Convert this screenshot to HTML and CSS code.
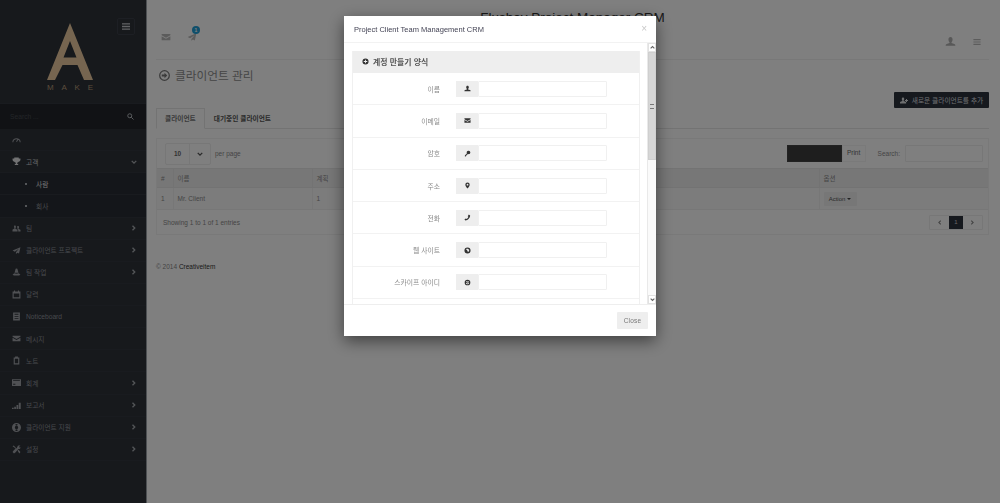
FILE: index.html
```html
<!DOCTYPE html>
<html lang="ko">
<head>
<meta charset="utf-8">
<title>Project Client Team Management CRM</title>
<link rel="stylesheet" href="styles.css">
</head>
<body>
<svg class="sprites" width="0" height="0" aria-hidden="true">
  <symbol id="i-user" viewBox="0 0 16 16"><path d="M8 1.500c2 0 3 1.500 3 3.500 0 1.600-.6 3-1.500 3.800v1.200l4 1.500c.8.300 1.500 1 1.500 1.500v1H1v-1c0-.5.700-1.200 1.500-1.500l4-1.500V8.800C5.600 8 5 6.600 5 5c0-2 1-3.500 3-3.500z"/></symbol>
  <symbol id="i-mail" viewBox="0 0 16 16"><path d="M1 3h14v2L8 9 1 5zM1 6.800l7 4 7-4V13H1z"/></symbol>
  <symbol id="i-key" viewBox="0 0 16 16"><path d="M10.500 1.500a4 4 0 0 1 0 8c-.5 0-1-.1-1.400-.3L8 10.500H6.500V12H5v1.500L3.500 15H2v-2.500l4.800-4.800a4 4 0 0 1 3.700-6.200z"/></symbol>
  <symbol id="i-pin" viewBox="0 0 16 16"><path fill-rule="evenodd" d="M8 1a5 5 0 0 1 5 5c0 3-3 6-5 9-2-3-5-6-5-9a5 5 0 0 1 5-5zm0 3a2 2 0 1 0 0 4 2 2 0 0 0 0-4z"/></symbol>
  <symbol id="i-phone" viewBox="0 0 16 16"><path d="M11 1l3 2.500C14 9 9 14.500 3 15l-2-3 3.500-2 1.500 1.500c2-1 3.500-3 4-5L8.500 5z"/></symbol>
  <symbol id="i-globe" viewBox="0 0 16 16"><path fill-rule="evenodd" d="M8 1a7 7 0 1 1 0 14A7 7 0 0 1 8 1zM4 5l3 2 1 3 3 1 1-4-3-3H6z"/></symbol>
  <symbol id="i-skype" viewBox="0 0 16 16"><path fill-rule="evenodd" d="M8 1.500a6.500 6.500 0 0 1 6.500 6.500A6.500 6.500 0 0 1 8 14.500 6.500 6.500 0 0 1 1.500 8 6.500 6.500 0 0 1 8 1.500zM8 4.500c-2 0-3 .8-3 2 0 2.500 4.500 1.500 4.500 3 0 .6-1 .7-1.500.7-1.500 0-1.500-1-2.500-1-.5 0-.9.4-.9.8 0 1 1.700 1.800 3.400 1.800 2 0 3.200-1 3.200-2.300 0-2.700-4.500-1.800-4.500-3.100 0-.5.6-.6 1.200-.6 1.300 0 1.300.8 2.200.8.500 0 .9-.4.9-.8 0-.8-1.300-1.300-3-1.300z"/></symbol>
  <symbol id="i-chev" viewBox="0 0 8 8"><path d="M2 1l3 3-3 3" fill="none" stroke="currentColor" stroke-width="1.800"/></symbol>
  <symbol id="i-down" viewBox="0 0 8 8"><path d="M1 2.500l3 3 3-3" fill="none" stroke="currentColor" stroke-width="1.800"/></symbol>
  <symbol id="i-menu" viewBox="0 0 12 10"><path d="M0 0h12v2H0zM0 4h12v2H0zM0 8h12v2H0z"/></symbol>
  <symbol id="i-send" viewBox="0 0 16 16"><path d="M15 2L1 8l4 2 7-5-5 6v3l2.500-2 3 1.500z"/></symbol>
  <symbol id="i-team" viewBox="0 0 18 14"><path d="M5.500 1c1.500 0 2.300 1 2.300 2.800 0 1.300-.5 2.200-1 2.700v1l3.200 1.500c.5.300 1 .8 1 1.500V13H1v-3c0-.7.500-1.200 1-1.500l3-1.500v-1c-.6-.5-1-1.400-1-2.700C4 2 4.500 1 5.500 1zM12 2c1.300 0 2 1 2 2.500 0 1-.4 1.800-.8 2.200V8l2.800 1c.5.200 1 .7 1 1.300V13h-4.500v-2.500c0-1-.7-1.700-1.500-2.200V6.700c-.4-.5-.5-1.200-.5-2.200C10 3 10.700 2 12 2z"/></symbol>
  <symbol id="i-hat" viewBox="0 0 16 16"><path d="M8 1a2 2 0 0 1 2 2l1.500 5.500h-7L6 3a2 2 0 0 1 2-2zM4 9.500c1.500 1 6.500 1 8 0l3 2.500c-1 2-13 2-14 0z"/></symbol>
  <symbol id="i-cal" viewBox="0 0 16 16"><path fill-rule="evenodd" d="M1 2.500h2.500V1h2v1.500h5V1h2v1.500H15V15H1zM3 6v7h10V6z"/></symbol>
  <symbol id="i-doc" viewBox="0 0 16 16"><path fill-rule="evenodd" d="M2 1h12v14H2zM4.500 3v2h7V3zM4.500 7v1.500h7V7zM4.500 10.500V12h7v-1.500z"/></symbol>
  <symbol id="i-note" viewBox="0 0 16 16"><path fill-rule="evenodd" d="M3 2.500h2.500V1h5v1.500H13V15H3zM5 5v8h6V5z"/></symbol>
  <symbol id="i-card" viewBox="0 0 16 12"><path fill-rule="evenodd" d="M0 0h16v12H0zM2 2v1.500h12V2zM2 8v2h4V8z"/></symbol>
  <symbol id="i-bars" viewBox="0 0 16 12"><path d="M0 10h3v2H0zM4 8h3v4H4zM8 5h3v7H8zM12 1h3.500v11H12z"/></symbol>
  <symbol id="i-life" viewBox="0 0 16 16"><path fill-rule="evenodd" d="M8 0a8 8 0 1 1 0 16A8 8 0 0 1 8 0zm0 5a3 3 0 1 0 0 6 3 3 0 0 0 0-6zM6 2.300l.5 2h3l.5-2a6 6 0 0 0-4 0zM6 13.700a6 6 0 0 0 4 0l-.5-2h-3z"/></symbol>
  <symbol id="i-tools" viewBox="0 0 16 16"><path d="M1 2l2-1 5 5 2.500-4.500C12 .5 14 .5 15 1l-2.500 2 .5 1.500 2-.5c.3 1.500-.8 3.500-3.500 3.300L6 13.500 3.500 15 1 12.500 2.500 10l4-4L3 3.500zM10 10l1.500-1.500L15 12.500 13 15z"/></symbol>
  <symbol id="i-gauge" viewBox="0 0 16 14"><path fill="none" stroke="currentColor" stroke-width="1.800" d="M1.500 12a6.500 6.500 0 1 1 13 0M8 11l3-5"/></symbol>
  <symbol id="i-trophy" viewBox="0 0 16 16"><path d="M4 1h8v1.500h3V5c0 2-1.500 3-3.200 3.300C11 9.500 10 10 9 10.300V12h2v2H5v-2h2v-1.700c-1-.3-2-.8-2.800-2C2.500 8 1 7 1 5V2.500h3z"/></symbol>
  <symbol id="i-search" viewBox="0 0 14 14"><path fill="none" stroke="currentColor" stroke-width="2" d="M8.500 8.500L13 13M9.500 5.500a4 4 0 1 1-8 0 4 4 0 0 1 8 0z"/></symbol>
  <symbol id="i-go" viewBox="0 0 16 16"><path fill="none" stroke="currentColor" stroke-width="1.800" d="M8 1a7 7 0 1 1 0 14A7 7 0 0 1 8 1z"/><path d="M8 4l4 4-4 4V9.500H4v-3h4z"/></symbol>
  <symbol id="i-plus" viewBox="0 0 16 16"><path fill-rule="evenodd" d="M8 1a7 7 0 1 1 0 14A7 7 0 0 1 8 1zM7 4v3H4v2h3v3h2V9h3V7H9V4z"/></symbol>
  <symbol id="i-adduser" viewBox="0 0 16 14"><path d="M6 1c1.700 0 2.500 1.200 2.500 3 0 1.300-.5 2.300-1.200 2.800V8l4 1.500c.5.200 1 .7 1 1.300V13H0v-2.200c0-.6.500-1.100 1-1.300l3.700-1.500V6.800C4 6.300 3.500 5.300 3.500 4 3.500 2.200 4.300 1 6 1zM12 4h2v2h2v2h-2v2h-2V8h-2V6h2z"/></symbol>
</svg>

<div class="app">
  <aside class="sidebar">
    <div class="brand">
      <div class="logo">
        <svg class="logo-a" viewBox="0 0 46 57" aria-hidden="true"><path fill-rule="evenodd" d="M23 0L46 57H37L30.500 42H15.500L8 57H0zM23 18L16.500 34.500H29.500z"/></svg>
        <div class="logo-word"><span>M</span><span>A</span><span>K</span><span>E</span></div>
      </div>
      <button class="collapse"><svg class="ic-menu"><use href="#i-menu"/></svg></button>
    </div>
    <div class="side-search">
      <span>Search ...</span>
      <svg class="ic-search"><use href="#i-search"/></svg>
    </div>
    <nav class="nav">
      <a class="nav-item"><svg class="nav-ic"><use href="#i-gauge"/></svg></a>
      <a class="nav-item open"><svg class="nav-ic"><use href="#i-trophy"/></svg><span>고객</span><svg class="chev"><use href="#i-down"/></svg></a>
      <a class="nav-sub active"><i></i><span>사람</span></a>
      <a class="nav-sub"><i></i><span>회사</span></a>
      <a class="nav-item"><svg class="nav-ic"><use href="#i-team"/></svg><span>팀</span><svg class="chev"><use href="#i-chev"/></svg></a>
      <a class="nav-item"><svg class="nav-ic"><use href="#i-send"/></svg><span>클라이언트 프로젝트</span><svg class="chev"><use href="#i-chev"/></svg></a>
      <a class="nav-item"><svg class="nav-ic"><use href="#i-hat"/></svg><span>팀 작업</span><svg class="chev"><use href="#i-chev"/></svg></a>
      <a class="nav-item"><svg class="nav-ic"><use href="#i-cal"/></svg><span>달력</span></a>
      <a class="nav-item"><svg class="nav-ic"><use href="#i-doc"/></svg><span>Noticeboard</span></a>
      <a class="nav-item"><svg class="nav-ic"><use href="#i-mail"/></svg><span>메시지</span></a>
      <a class="nav-item"><svg class="nav-ic"><use href="#i-note"/></svg><span>노트</span></a>
      <a class="nav-item"><svg class="nav-ic"><use href="#i-card"/></svg><span>회계</span><svg class="chev"><use href="#i-chev"/></svg></a>
      <a class="nav-item"><svg class="nav-ic"><use href="#i-bars"/></svg><span>보고서</span><svg class="chev"><use href="#i-chev"/></svg></a>
      <a class="nav-item"><svg class="nav-ic"><use href="#i-life"/></svg><span>클라이언트 지원</span><svg class="chev"><use href="#i-chev"/></svg></a>
      <a class="nav-item"><svg class="nav-ic"><use href="#i-tools"/></svg><span>설정</span><svg class="chev"><use href="#i-chev"/></svg></a>
    </nav>
  </aside>

  <main class="main">
    <h1 class="site-title">Flushay Project Manager CRM</h1>
    <header class="topbar">
      <div class="top-left">
        <svg class="top-ic"><use href="#i-mail"/></svg>
        <span class="notif"><svg class="top-ic"><use href="#i-send"/></svg><b>1</b></span>
      </div>
      <div class="top-right">
        <svg class="top-user"><use href="#i-user"/></svg>
        <svg class="top-menu"><use href="#i-menu"/></svg>
      </div>
    </header>
    <div class="page-head">
      <svg class="head-ic"><use href="#i-go"/></svg>
      <h2>클라이언트 관리</h2>
    </div>
    <div class="tabs-row">
      <div class="tabs">
        <a class="tab active">클라이언트</a>
        <a class="tab">대기중인 클라이언트</a>
      </div>
      <button class="add-btn"><svg class="add-ic"><use href="#i-adduser"/></svg>새로운 클라이언트를 추가</button>
    </div>
    <section class="panel">
      <div class="tools">
        <div class="per">
          <div class="select"><span class="sel-val">10</span><span class="sel-arr"><svg class="sel-ic"><use href="#i-down"/></svg></span></div>
          <span class="per-text">per page</span>
        </div>
        <div class="tools-right">
          <span class="black-box"></span>
          <span class="print">Print</span>
          <label class="search-label">Search:</label>
          <span class="search-input"></span>
        </div>
      </div>
      <table class="grid">
        <thead><tr><th class="c1">#</th><th class="c2">이름</th><th class="c3">계획</th><th class="c4">옵션</th></tr></thead>
        <tbody><tr><td>1</td><td>Mr. Client</td><td>1</td><td><span class="action">Action<i class="caret"></i></span></td></tr></tbody>
      </table>
      <div class="foot">
        <span>Showing 1 to 1 of 1 entries</span>
        <div class="pager"><span><svg class="pg-ic pg-flip"><use href="#i-chev"/></svg></span><span class="cur">1</span><span><svg class="pg-ic"><use href="#i-chev"/></svg></span></div>
      </div>
    </section>
    <footer class="copy">© 2014 <a>Creativeitem</a></footer>
  </main>
</div>

<div class="overlay"></div>

<div class="modal" role="dialog">
  <div class="modal-head">
    <h3>Project Client Team Management CRM</h3>
    <span class="close-x">×</span>
  </div>
  <div class="modal-body">
    <div class="scroll-content">
      <div class="form-card">
        <div class="form-title"><svg class="plus-ic"><use href="#i-plus"/></svg><span>계정 만들기 양식</span></div>
        <div class="row"><label>이름</label><div class="field"><span class="addon"><svg class="add-svg"><use href="#i-user"/></svg></span><span class="input"></span></div></div>
        <div class="row"><label>이메일</label><div class="field"><span class="addon"><svg class="add-svg"><use href="#i-mail"/></svg></span><span class="input"></span></div></div>
        <div class="row"><label>암호</label><div class="field"><span class="addon"><svg class="add-svg"><use href="#i-key"/></svg></span><span class="input"></span></div></div>
        <div class="row"><label>주소</label><div class="field"><span class="addon"><svg class="add-svg"><use href="#i-pin"/></svg></span><span class="input"></span></div></div>
        <div class="row"><label>전화</label><div class="field"><span class="addon"><svg class="add-svg"><use href="#i-phone"/></svg></span><span class="input"></span></div></div>
        <div class="row"><label>웹 사이트</label><div class="field"><span class="addon"><svg class="add-svg"><use href="#i-globe"/></svg></span><span class="input"></span></div></div>
        <div class="row"><label>스카이프 아이디</label><div class="field"><span class="addon"><svg class="add-svg"><use href="#i-skype"/></svg></span><span class="input"></span></div></div>
        <div class="row"></div>
      </div>
    </div>
    <div class="scrollbar">
      <span class="sb-btn"><svg class="sb-ic sb-up"><use href="#i-down"/></svg></span>
      <div class="sb-track"><div class="sb-thumb"><i></i></div></div>
      <span class="sb-btn"><svg class="sb-ic"><use href="#i-down"/></svg></span>
    </div>
  </div>
  <div class="modal-foot"><button class="close-btn">Close</button></div>
</div>
</body>
</html>
```
FILE: styles.css
```css
* { box-sizing: border-box; }
html, body { margin: 0; height: 503px; overflow: hidden; }
body { font-family: "Liberation Sans", "Noto Sans CJK KR", sans-serif; font-size: 6.500px; color: #666; background: #fff; }
.sprites { position: absolute; }
svg { fill: currentColor; display: block; flex: none; }

.app { display: flex; height: 503px; }
.sidebar { width: 146px; flex: none; background: #2e3239; color: #8f9399; font-size: 6.700px; }
.brand { height: 104px; position: relative; display: flex; justify-content: center; padding: 23px 6px 0 0; border-bottom: 1px solid #33373f; }
.logo { width: 46px; display: flex; flex-direction: column; align-items: center; }
.logo-a { width: 46px; height: 57px; color: #eccba0; }
.logo-word { width: 46px; margin-top: 3px; display: flex; justify-content: space-between; font-size: 8px; line-height: 9px; color: #b59a78; }
.collapse { position: absolute; left: 117px; top: 18px; width: 18px; height: 17px; padding: 0; border: 1px solid #3a3f48; background: transparent; border-radius: 2px; color: #c4c6ca; display: flex; align-items: center; justify-content: center; }
.ic-menu { width: 8px; height: 7px; }
.side-search { height: 25px; background: #22252b; display: flex; align-items: center; justify-content: space-between; padding: 0 12px 0 10px; color: #474a50; }
.ic-search { width: 7px; height: 7px; color: #b4b8bd; }
.nav { display: flex; flex-direction: column; }
.nav-item, .nav-sub { height: 22.130px; flex: none; display: flex; align-items: center; border-bottom: 1px solid #33373f; padding-left: 12px; white-space: nowrap; }
.nav-ic { width: 9px; height: 9px; margin-right: 5px; color: #a0a3a8; }
.nav-item.open { color: #c9ccd0; }
.nav-item.open .nav-ic { color: #e4e5e7; }
.chev { width: 6px; height: 6px; margin-left: auto; margin-right: 9px; color: #a8acb0; }
.nav-sub { background: #292d34; padding-left: 25px; }
.nav-sub i { width: 2px; height: 2px; background: #a8acb2; margin-right: 9px; }
.nav-sub.active { color: #e4e6e8; }

.main { flex: 1; min-width: 0; background: #fff; padding: 0 11px 0 9px; border-left: 1px solid #9aa0a6; color: #8a8a8a; }
.site-title { margin: 0; height: 32px; padding-top: 9px; text-align: center; font-size: 13.500px; line-height: 18px; font-weight: 400; color: #333; }
.topbar { height: 28px; display: flex; justify-content: space-between; align-items: center; border-bottom: 1px solid #f0f0f0; padding: 0 8px 0 5px; }
.top-left { display: flex; gap: 16px; align-items: center; margin-top: -18px; }
.top-ic { width: 10px; height: 10px; color: #b9b9b9; }
.notif { position: relative; }
.notif b { position: absolute; left: 5px; top: -6px; width: 8px; height: 8px; border-radius: 50%; background: #1f9ed6; color: #fff; font-size: 5px; line-height: 8px; text-align: center; }
.top-right { display: flex; gap: 17px; align-items: center; margin-top: -8px; }
.top-user { width: 11px; height: 11px; color: #b0b0b0; }
.top-menu { width: 8px; height: 6px; color: #b9b9b9; }
.page-head { display: flex; align-items: center; gap: 5px; padding: 1px 0 0 3px; height: 30px; }
.head-ic { width: 11px; height: 11px; color: #777; }
.page-head h2 { margin: 0; font-size: 11.700px; font-weight: 400; line-height: 14px; color: #8e8e8e; }
.tabs-row { height: 39px; padding-top: 2px; display: flex; justify-content: space-between; align-items: flex-start; border-bottom: 1px solid #e6e6e6; }
.tabs { display: flex; align-self: flex-end; margin-bottom: -1px; }
.tab { height: 21px; padding: 0 8px; line-height: 20px; font-weight: 700; font-size: 6.700px; color: #555; border: 1px solid transparent; }
.tab.active { background: #fff; border-color: #e6e6e6 #e6e6e6 #fff; color: #777; }
.add-btn { margin: 0; height: 16px; width: 95px; border: 0; border-radius: 1px; background: #2c333c; color: #dcdee0; font: 6.700px "Liberation Sans", "Noto Sans CJK KR", sans-serif; display: flex; align-items: center; justify-content: center; gap: 2px; white-space: nowrap; padding: 0; }
.add-ic { width: 8px; height: 7px; margin-right: 2px; }
.panel { margin-top: 9px; border: 1px solid #f2f2f2; }
.tools { height: 29px; display: flex; justify-content: space-between; align-items: center; padding: 0 5px 0 8px; }
.per { display: flex; align-items: center; gap: 4px; }
.select { display: flex; width: 46px; height: 22px; border: 1px solid #eee; border-radius: 2px; }
.sel-val { flex: 1; font-weight: 700; color: #666; text-align: center; line-height: 20px; }
.sel-arr { width: 21px; border-left: 1px solid #eee; display: flex; align-items: center; justify-content: center; color: #555; }
.sel-ic { width: 6px; height: 6px; }
.tools-right { display: flex; align-items: center; }
.black-box { width: 55px; height: 17px; background: #3c3c3c; border: 1px solid #444; }
.print { width: 24px; height: 17px; line-height: 14px; text-align: center; border: 1px solid #f4f4f4; color: #666; }
.search-label { margin-left: 12px; }
.search-input { width: 78px; height: 17px; margin-left: 5px; border: 1px solid #eee; border-radius: 1px; }
.grid { width: 100%; border-collapse: collapse; table-layout: fixed; }
.grid th { height: 19px; background: #efefef; text-align: left; font-weight: 400; padding: 0 4px; border: 1px solid #e7e7e7; }
.grid th:first-child, .grid td:first-child { border-left: 0; }
.grid th:last-child, .grid td:last-child { border-right: 0; }
.grid td { height: 22px; padding: 0 4px; background: #f8f8f8; border: 1px solid #efefef; }
.c1 { width: 16px; } .c2 { width: 139px; } .c3 { width: 507px; }
.action { display: inline-flex; align-items: center; gap: 2px; height: 14px; width: 33px; justify-content: center; background: #eee; border-radius: 1px; color: #555; font-size: 6px; }
.caret { width: 0; height: 0; border: 2px solid transparent; border-top: 2px solid #444; border-bottom: 0; }
.foot { height: 24px; display: flex; justify-content: space-between; align-items: center; padding: 0 5px 0 6px; }
.pager { display: flex; height: 15px; border: 1px solid #eee; border-radius: 1px; }
.pager span { width: 19px; display: flex; align-items: center; justify-content: center; color: #888; }
.pager .cur { width: 14px; background: #2c333c; color: #ccc; font-size: 6px; }
.pg-ic { width: 5px; height: 5px; }
.pg-flip { transform: scaleX(-1); }
.copy { margin-top: 28px; }
.copy a { color: #333; }

.overlay { position: fixed; inset: 0; background: rgba(0,0,0,.5); }
.modal { position: fixed; left: 344px; top: 16px; width: 312px; height: 320px; background: #fff; box-shadow: 0 5px 15px rgba(0,0,0,.5); display: flex; flex-direction: column; }
.modal-head { height: 27px; flex: none; display: flex; justify-content: space-between; align-items: center; padding: 0 9px 0 10px; border-bottom: 1px solid #f2f2f2; }
.modal-head h3 { margin: 0; font-size: 7.500px; font-weight: 400; color: #445; white-space: nowrap; }
.close-x { font-size: 10px; color: #c8c8c8; line-height: 10px; }
.modal-body { height: 261px; flex: none; display: flex; overflow: hidden; position: relative; padding-left: 1px; }
.scroll-content { flex: 1; min-width: 0; overflow: hidden; padding: 8px 7px 0 7px; }
.form-card { border: 1px solid #f0f0f0; border-top: 0; }
.form-title { height: 22px; background: #eee; display: flex; align-items: center; gap: 4px; padding: 0 0 2px 9px; font-size: 7.900px; font-weight: 700; color: #555; }
.plus-ic { width: 7px; height: 7px; color: #333; }
.row { height: 32.300px; display: flex; align-items: center; border-bottom: 1px solid #f2f2f2; }
.row label { width: 87px; text-align: right; color: #8a8a8a; font-size: 6.800px; }
.field { display: flex; margin-left: 16px; width: 151px; height: 16px; }
.addon { width: 22px; background: #eee; display: flex; align-items: center; justify-content: center; color: #333; }
.add-svg { width: 7px; height: 7px; }
.input { flex: 1; border: 1px solid #f0f0f0; border-radius: 1px; }
.scrollbar { width: 9px; flex: none; display: flex; flex-direction: column; border-left: 1px solid #e9e9e9; background: #fafafa; }
.sb-btn { height: 9px; flex: none; background: #fff; border: 1px solid #e2e2e2; display: flex; align-items: center; justify-content: center; color: #666; }
.sb-ic { width: 5px; height: 5px; }
.sb-up { transform: scaleY(-1); }
.sb-track { flex: 1; }
.sb-thumb { height: 108px; background: #d6d6d6; border: 1px solid #cfcfcf; display: flex; align-items: center; justify-content: center; }
.sb-thumb i { width: 4px; height: 5px; border-top: 1px solid #777; border-bottom: 1px solid #777; }
.modal-foot { flex: 1; display: flex; justify-content: flex-end; align-items: center; padding: 0 8px 0 0; border-top: 1px solid #eee; }
.close-btn { width: 31px; height: 17px; padding: 0; border: 0; border-radius: 1px; background: #eee; color: #777; font: 6.500px "Liberation Sans", sans-serif; letter-spacing: .2px; }
```
